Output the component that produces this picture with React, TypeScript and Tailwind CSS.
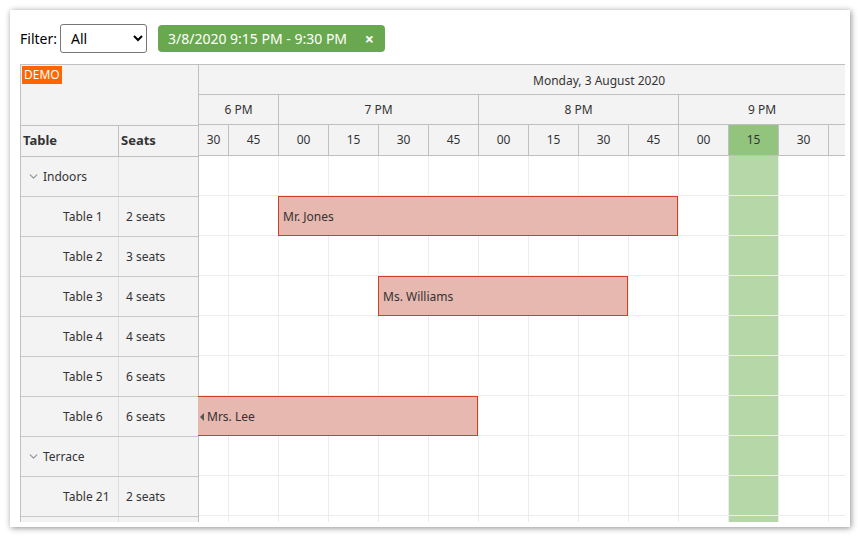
import { ChevronDown } from "lucide-react";

const font = "font-['Noto_Sans',Tahoma,sans-serif]";

type Slot = { label: string; width: string; highlight?: boolean };

const hours = [
  { label: "6 PM", width: "w-[80px]" },
  { label: "7 PM", width: "w-[200px]" },
  { label: "8 PM", width: "w-[200px]" },
  { label: "9 PM", width: "w-[167px]" },
];

const slots: Slot[] = [
  { label: "30", width: "w-[30px]" },
  { label: "45", width: "w-[50px]" },
  { label: "00", width: "w-[50px]" },
  { label: "15", width: "w-[50px]" },
  { label: "30", width: "w-[50px]" },
  { label: "45", width: "w-[50px]" },
  { label: "00", width: "w-[50px]" },
  { label: "15", width: "w-[50px]" },
  { label: "30", width: "w-[50px]" },
  { label: "45", width: "w-[50px]" },
  { label: "00", width: "w-[50px]" },
  { label: "15", width: "w-[50px]", highlight: true },
  { label: "30", width: "w-[50px]" },
  { label: "", width: "w-[17px]" },
];

type Reservation = { name: string; className: string; cut?: boolean };

type Row = { id: string; name?: string; seats?: string; group?: boolean; event?: Reservation };

const rows: Row[] = [
  { id: "indoors", name: "Indoors", group: true },
  { id: "t1", name: "Table 1", seats: "2 seats", event: { name: "Mr. Jones", className: "left-[79px] w-[400px]" } },
  { id: "t2", name: "Table 2", seats: "3 seats" },
  { id: "t3", name: "Table 3", seats: "4 seats", event: { name: "Ms. Williams", className: "left-[179px] w-[250px]" } },
  { id: "t4", name: "Table 4", seats: "4 seats" },
  { id: "t5", name: "Table 5", seats: "6 seats" },
  { id: "t6", name: "Table 6", seats: "6 seats", event: { name: "Mrs. Lee", className: "-left-px w-[280px]", cut: true } },
  { id: "terrace", name: "Terrace", group: true },
  { id: "t21", name: "Table 21", seats: "2 seats" },
  // next row only peeks in below the fold
  { id: "t22" },
];

function RowHeader({ row }: { row: Row }) {
  return (
    <div className="flex h-[40px] border-b border-[#c8c8c8]">
      <div className="flex w-[98px] shrink-0 items-center border-r border-[#dedede]">
        {row.group ? (
          <>
            <ChevronDown className="ml-[6px] h-[13px] w-[13px] text-[#9a9a9a]" strokeWidth={2.5} />
            <span className="ml-[3px]">{row.name}</span>
          </>
        ) : (
          <span className="pl-[42px]">{row.name}</span>
        )}
      </div>
      <div className="flex w-[79px] items-center pl-[7px]">{row.seats}</div>
    </div>
  );
}

function TimelineRow({ row }: { row: Row }) {
  return (
    <div className="relative flex h-[40px]">
      {slots.map((s, i) => (
        <div
          key={i}
          className={`${s.width} shrink-0 border-r border-b border-[#ececec] ${s.highlight ? "bg-[#b6d7a8]" : "bg-white"}`}
        />
      ))}
      {row.event && (
        <div
          className={`absolute top-0 flex h-[40px] items-center border-y border-r border-[#cc4125] bg-[#e6b8af] pt-px text-[#333] ${row.event.cut ? "pl-[2px]" : "border-l pl-[4px]"} ${row.event.className}`}
        >
          {row.event.cut && (
            <span className="mr-[3px] h-0 w-0 border-y-[4px] border-r-[4px] border-y-transparent border-r-[#555]" />
          )}
          {row.event.name}
        </div>
      )}
    </div>
  );
}

export default function App() {
  return (
    <div className={`h-[537px] w-[860px] bg-white p-[10px] ${font}`}>
      <div className="h-[517px] w-[840px] bg-white pl-[10px] pt-[14px] shadow-[1px_1px_6px_rgba(0,0,0,0.45)]">
        <div className="flex items-center text-[14px] text-black">
          <span className="mr-[3px]">Filter:</span>
          <select className="h-[29px] w-[87px] rounded-[3px] border border-[#767676] bg-white pl-[6px] text-[14px] text-black">
            <option>All</option>
            <option>Indoors</option>
            <option>Terrace</option>
          </select>
          <div className="ml-[11px] flex h-[27px] w-[227px] items-center rounded-[4px] bg-[#6aa84f] pl-[10px] text-white">
            <span>3/8/2020 9:15 PM - 9:30 PM</span>
            <span className="ml-auto mr-[11px] text-[16px] font-bold leading-none">×</span>
          </div>
        </div>

        <div className="mt-[11px] flex h-[458px] w-[825px] overflow-hidden border-l border-t border-[#c0c0c0] text-[12px] text-[#333]">
          {/* resource columns */}
          <div className="w-[178px] shrink-0 border-r border-[#c0c0c0] bg-[#f3f3f3]">
            <div className="h-[61px] border-b border-[#c0c0c0] pl-[1px] pt-[1px]">
              <span className="inline-block h-[18px] bg-[#ff6600] px-[2px] leading-[18px] text-white">DEMO</span>
            </div>
            <div className="flex h-[31px] border-b border-[#c0c0c0] font-bold">
              <div className="flex w-[98px] items-center border-r border-[#c0c0c0] pl-[2px] text-[13px]">Table</div>
              <div className="flex items-center pl-[2px] text-[13px]">Seats</div>
            </div>
            {rows.map((r) => (
              <RowHeader key={r.id} row={r} />
            ))}
          </div>

          {/* time axis and grid */}
          <div className="w-[647px] shrink-0">
            <div className="flex h-[30px] items-center border-b border-[#c0c0c0] bg-[#f3f3f3] pl-[334px] pt-[2px]">
              Monday, 3 August 2020
            </div>
            <div className="flex h-[30px] border-b border-[#c0c0c0] bg-[#f3f3f3]">
              {hours.map((h) => (
                <div key={h.label} className={`${h.width} flex shrink-0 items-center justify-center border-r border-[#c0c0c0] pt-px`}>
                  {h.label}
                </div>
              ))}
            </div>
            <div className="flex h-[31px] border-b border-[#c0c0c0] bg-[#f3f3f3]">
              {slots.map((s, i) => (
                <div
                  key={i}
                  className={`${s.width} flex shrink-0 items-center justify-center border-r border-[#c0c0c0] ${s.highlight ? "bg-[#93c47d]" : ""}`}
                >
                  {s.label}
                </div>
              ))}
            </div>
            {rows.map((r) => (
              <TimelineRow key={r.id} row={r} />
            ))}
          </div>
        </div>
      </div>
    </div>
  );
}
